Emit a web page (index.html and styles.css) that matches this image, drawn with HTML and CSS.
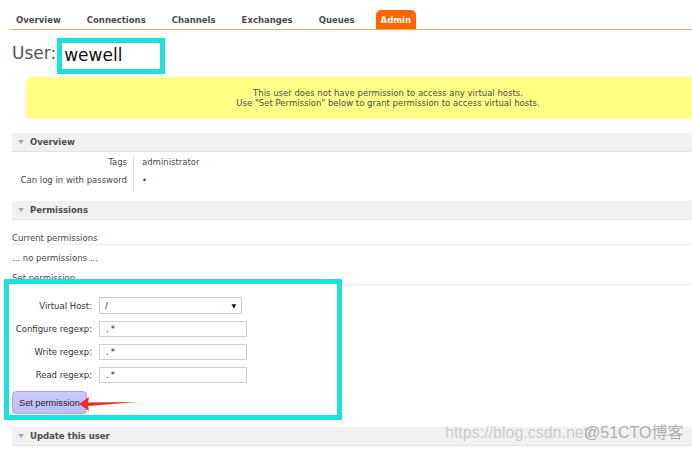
FILE: index.html
```html
<!DOCTYPE html>
<html lang="en">
<head>
<meta charset="utf-8">
<title>User: wewell</title>
<link rel="stylesheet" href="styles.css">
</head>
<body>
<div class="page">
  <ul class="nav">
    <li class="tab">Overview</li>
    <li class="tab">Connections</li>
    <li class="tab">Channels</li>
    <li class="tab">Exchanges</li>
    <li class="tab">Queues</li>
    <li class="tab active">Admin</li>
  </ul>

  <h1 class="title"><span class="title-label">User:</span><span class="highlight-name">wewell</span></h1>

  <div class="warning">
    <p>This user does not have permission to access any virtual hosts.</p>
    <p>Use "Set Permission" below to grant permission to access virtual hosts.</p>
  </div>

  <h2 class="section-head"><span class="tri"></span>Overview</h2>
  <div class="facts">
    <div class="fact-key first">Tags</div><div class="fact-val first">administrator</div>
    <div class="fact-key second">Can log in with password</div><div class="fact-val second">&#8226;</div>
  </div>

  <h2 class="section-head perm-head"><span class="tri"></span>Permissions</h2>
  <h3 class="sub-head current">Current permissions</h3>
  <p class="none">... no permissions ...</p>
  <h3 class="sub-head setp">Set permission</h3>

  <form class="perm-form">
    <div class="form-grid">
      <label class="flabel">Virtual Host:</label>
      <div class="fselect"><span>/</span><span class="sel-arrow">&#9660;</span></div>
      <label class="flabel">Configure regexp:</label>
      <div class="finput">.*</div>
      <label class="flabel">Write regexp:</label>
      <div class="finput">.*</div>
      <label class="flabel">Read regexp:</label>
      <div class="finput">.*</div>
    </div>
    <button type="button" class="btn">Set permission</button>
    <svg class="arrow" width="62" height="20" viewBox="0 0 62 20">
      <polygon points="0,9 10,2 9,7.5 58,7 9,11 10,16" fill="#ec2b2b"/>
    </svg>
  </form>

  <h2 class="section-head update-head"><span class="tri"></span>Update this user</h2>
</div>
<div class="wm wm-url">https://blog.csdn.net/</div>
<div class="wm wm-brand">@51CTO博客</div>
</body>
</html>
```

FILE: styles.css
```css
html, body {
  margin: 0;
  padding: 0;
  background: #fff;
  overflow: hidden;
}
body {
  font-family: "DejaVu Sans", Verdana, sans-serif;
  font-size: 8.5px;
  color: #484848;
  height: 452px;
  position: relative;
}
.page {
  padding-left: 11px;
  padding-top: 10px;
}
.nav {
  display: flex;
  list-style: none;
  margin: 0;
  padding: 0;
  border-bottom: 1px solid #f6a456;
}
.tab {
  padding: 0 5px;
  margin-right: 16px;
  height: 19px;
  line-height: 20px;
  font-weight: bold;
  color: #4a4a4a;
}
.tab.active {
  background: #ff6600;
  color: #fff;
  border-radius: 5px 5px 0 0;
}
.title {
  display: flex;
  align-items: center;
  margin: 8px 0 0 0;
  height: 36px;
  font-weight: normal;
}
.title-label {
  font-size: 17px;
  color: #555;
  margin-bottom: 7px;
  margin-left: 1px;
  margin-right: 1px;
}
.highlight-name {
  display: inline-block;
  border: 5px solid #1ddfdc;
  width: 96px;
  height: 26px;
  line-height: 24px;
  padding-left: 2px;
  font-size: 17px;
  color: #111;
}
.warning {
  margin: 3px 0 0 15px;
  height: 42px;
  border-radius: 6px 0 0 6px;
  background: #ffff86;
  display: flex;
  flex-direction: column;
  justify-content: center;
  text-align: center;
  padding-left: 58px;
  color: #4c4c4c;
}
.warning p {
  margin: 0;
  line-height: 10px;
}
.section-head {
  display: flex;
  align-items: center;
  margin: 14px 0 0 1px;
  height: 18px;
  padding-left: 6px;
  background: #f1f1f1;
  border-bottom: 1px solid #e2e2e2;
  font-size: 8.5px;
  font-weight: bold;
  color: #4a4a4a;
}
.tri {
  width: 0;
  height: 0;
  border-left: 3.5px solid transparent;
  border-right: 3.5px solid transparent;
  border-top: 4px solid #a8a8a8;
  margin-right: 6px;
}
.facts {
  display: grid;
  grid-template-columns: 123px auto;
  margin-top: 4px;
}
.fact-key {
  text-align: right;
  padding-right: 6px;
  border-right: 1px solid #dcdcdc;
  line-height: 12px;
}
.fact-val {
  padding-left: 8px;
  line-height: 12px;
}
.second {
  padding-top: 6px;
  padding-bottom: 6px;
}
.perm-head {
  margin-top: 9px;
}
.sub-head {
  margin: 12px 0 0 1px;
  font-size: 8.5px;
  font-weight: normal;
  line-height: 12px;
  border-bottom: 1px solid #ececec;
}
.setp {
  margin-top: 8px;
}
.none {
  margin: 7px 0 0 1px;
  line-height: 12px;
}
.perm-form {
  position: relative;
  margin: -6px 0 0 -7px;
  width: 328px;
  height: 118px;
  border: 5px solid #1ddfdc;
  background: #fff;
  padding-top: 13px;
}
.form-grid {
  display: grid;
  grid-template-columns: 83px auto;
  column-gap: 7px;
  row-gap: 7px;
  align-items: center;
}
.flabel {
  text-align: right;
  color: #333;
  white-space: nowrap;
}
.fselect {
  height: 15px;
  width: 131px;
  border: 1px solid #c4c4c4;
  border-radius: 2px;
  display: flex;
  align-items: center;
  justify-content: space-between;
  padding: 0 5px;
  color: #333;
}
.sel-arrow {
  font-size: 6px;
  color: #111;
}
.finput {
  width: 140px;
  height: 14px;
  line-height: 14px;
  border: 1px solid #cfcfcf;
  padding-left: 6px;
  letter-spacing: 2px;
  color: #222;
}
.btn {
  display: block;
  margin: 8px 0 0 3px;
  width: 75px;
  height: 23px;
  background: linear-gradient(#cacafb, #bdbdf3);
  border: 1px solid #a5a5e6;
  border-radius: 4px;
  font-family: "Liberation Sans", Arial, sans-serif;
  font-size: 9.2px;
  color: #222;
  text-align: left;
  padding: 0 0 0 6px;
}
.arrow {
  position: absolute;
  left: 70px;
  top: 111px;
}
.update-head {
  margin-top: 7px;
}
.wm {
  position: absolute;
  top: 423px;
  font-family: "Liberation Sans", Arial, "Noto Sans CJK SC", sans-serif;
  font-size: 16px;
  line-height: 20px;
}
.wm-url {
  left: 445px;
  color: rgba(170, 170, 170, 0.55);
}
.wm-brand {
  left: 584px;
  color: rgba(150, 150, 150, 0.75);
}
```
